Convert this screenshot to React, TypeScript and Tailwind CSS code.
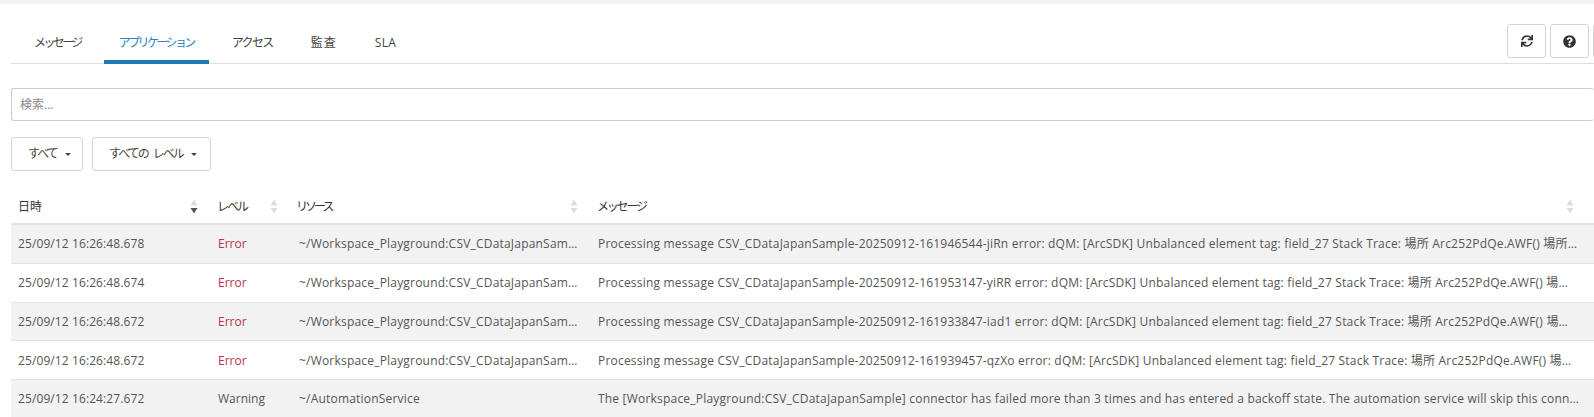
import React from 'react';
import { FaSync, FaQuestionCircle } from 'react-icons/fa';

const jp = "font-['Open_Sans','Noto_Sans_CJK_JP',sans-serif]";

const tabs = [
  { label: 'メッセージ', cls: 'tracking-[-2.6px]' },
  { label: 'アプリケーション', cls: 'tracking-[-2.6px]', active: true },
  { label: 'アクセス', cls: 'tracking-[-1.6px]' },
  { label: '監査', cls: 'tracking-[1px]' },
  { label: 'SLA', cls: 'tracking-[0.3px]' },
];

const tail = ' at Arc252PdQe.LmN() at Arc252PdQe.QvB()';

const rows = [
  {
    time: '25/09/12 16:26:48.678',
    level: 'Error',
    resource: '~/Workspace_Playground:CSV_CDataJapanSample',
    message: 'Processing message CSV_CDataJapanSample-20250912-161946544-jiRn error: dQM: [ArcSDK] Unbalanced element tag: field_27 Stack Trace: 場所 Arc252PdQe.AWF() 場所' + tail,
  },
  {
    time: '25/09/12 16:26:48.674',
    level: 'Error',
    resource: '~/Workspace_Playground:CSV_CDataJapanSample',
    message: 'Processing message CSV_CDataJapanSample-20250912-161953147-yiRR error: dQM: [ArcSDK] Unbalanced element tag: field_27 Stack Trace: 場所 Arc252PdQe.AWF() 場所' + tail,
  },
  {
    time: '25/09/12 16:26:48.672',
    level: 'Error',
    resource: '~/Workspace_Playground:CSV_CDataJapanSample',
    message: 'Processing message CSV_CDataJapanSample-20250912-161933847-iad1 error: dQM: [ArcSDK] Unbalanced element tag: field_27 Stack Trace: 場所 Arc252PdQe.AWF() 場所' + tail,
  },
  {
    time: '25/09/12 16:26:48.672',
    level: 'Error',
    resource: '~/Workspace_Playground:CSV_CDataJapanSample',
    message: 'Processing message CSV_CDataJapanSample-20250912-161939457-qzXo error: dQM: [ArcSDK] Unbalanced element tag: field_27 Stack Trace: 場所 Arc252PdQe.AWF() 場所' + tail,
  },
  {
    time: '25/09/12 16:24:27.672',
    level: 'Warning',
    resource: '~/AutomationService',
    message: 'The [Workspace_Playground:CSV_CDataJapanSample] connector has failed more than 3 times and has entered a backoff state. The automation service will skip this connector until it recovers',
  },
];

const SortIcon: React.FC<{ down?: boolean }> = ({ down }) => (
  <svg width="8" height="15" viewBox="0 0 8 15" className="shrink-0">
    <path d="M4 0.5 L7.5 6.5 L0.5 6.5 Z" fill="#dcdcdc" />
    <path d="M0.5 9 L7.5 9 L4 14.5 Z" fill={down ? '#555' : '#dcdcdc'} />
  </svg>
);

const Caret = () => <span className="ml-[8px] inline-block border-x-[3px] border-t-[3px] border-x-transparent border-t-[#444]" />;

const HeadCell: React.FC<{ label: string; w: string; tr: string; pr: string; pl: string; down?: boolean }> = ({ label, w, tr, pr, pl, down }) => (
  <div className={`${w} ${pr} ${pl} flex shrink-0 items-center justify-between`}>
    <span className={`${tr} text-[12px] text-[#333]`}>{label}</span>
    <SortIcon down={down} />
  </div>
);

const App: React.FC = () => {
  return (
    <div className={`${jp} h-[417px] w-[1594px] overflow-hidden bg-white text-[12px] text-[#555]`}>
      <div className="h-[4px] bg-[#f1f1f1]" />
      <div className="pl-[11px]">
        <div className="flex h-[60px] items-end justify-between border-b border-[#dedede]">
          <div className="flex items-end gap-[8px] pl-[8px]">
            {tabs.map(t => (
              <div
                key={t.label}
                className={`-mb-px flex h-[40px] items-center border-b-4 px-[15px] pt-[2px] text-[12px] ${t.cls} ${
                  t.active ? 'border-[#1f7ab0] text-[#2b83b5]' : 'border-transparent text-[#444]'
                }`}
              >
                {t.label}
              </div>
            ))}
          </div>
          <div className="mb-[5px] flex gap-[4px] pr-0">
            <button className="flex h-[34px] w-[39px] items-center justify-center rounded-[3px] border border-[#d4d4d4] text-[#333]">
              <FaSync size={12} />
            </button>
            <button className="flex h-[34px] w-[39px] items-center justify-center rounded-[3px] border border-[#d4d4d4] text-[#333]">
              <FaQuestionCircle size={13} />
            </button>
            <div className="-mr-[9px] h-[34px] w-[10px] rounded-l-[3px] border border-[#d4d4d4]" />
          </div>
        </div>

        <input
          placeholder="検索..."
          className="mt-[24px] block h-[33px] w-full rounded-[3px] border border-r-0 border-[#ccc] px-[8px] text-[12px] outline-none placeholder:text-[#888]"
        />

        <div className="mt-[16px] flex gap-[9px]">
          <button className="flex h-[34px] w-[72px] items-center justify-start rounded-[3px] border border-[#d4d4d4] pl-[16px] text-[12px] tracking-[-2px] text-[#444]">
            すべて<Caret />
          </button>
          <button className="flex h-[34px] w-[119px] items-center justify-start rounded-[3px] border border-[#d4d4d4] pl-[16px] text-[12px] tracking-[-2px] text-[#444]">
            すべての<span className="ml-[5px]">レベル</span><Caret />
          </button>
        </div>

        <div className="mt-[13px] flex h-[41px] items-center border-b-2 border-[#e4e4e4] pt-[6px]">
          <HeadCell label="日時" w="w-[200px]" tr="" pl="pl-[7px]" pr="pr-[13px]" down />
          <HeadCell label="レベル" w="w-[81px]" tr="tracking-[-2px]" pl="pl-[6px]" pr="pr-[14px]" />
          <HeadCell label="リソース" w="w-[299px]" tr="tracking-[-3px]" pl="pl-[4px]" pr="pr-[13px]" />
          <HeadCell label="メッセージ" w="flex-1" tr="tracking-[-2.2px]" pl="pl-[6px]" pr="pr-[20px]" />
        </div>

        {rows.map((r, i) => (
          <div
            key={i}
            className={`flex h-[38.75px] items-center border-b border-[#e4e4e4] pt-[1px] ${i % 2 === 0 ? 'bg-[#f2f2f2]' : 'bg-white'}`}
          >
            <div className="w-[200px] shrink-0 pl-[7px] tracking-[0.1px]">{r.time}</div>
            <div className={`w-[81px] shrink-0 pl-[7px] ${r.level === 'Error' ? 'text-[#b9304a]' : ''}`}>{r.level}</div>
            <div className="w-[299px] shrink-0 truncate pl-[7px] pr-[12px] tracking-[0.2px]">{r.resource}</div>
            <div className="min-w-0 flex-1 truncate pl-[7px] pr-[15px] tracking-[0.2px]">{r.message}</div>
          </div>
        ))}
      </div>
    </div>
  );
};

export default App;
